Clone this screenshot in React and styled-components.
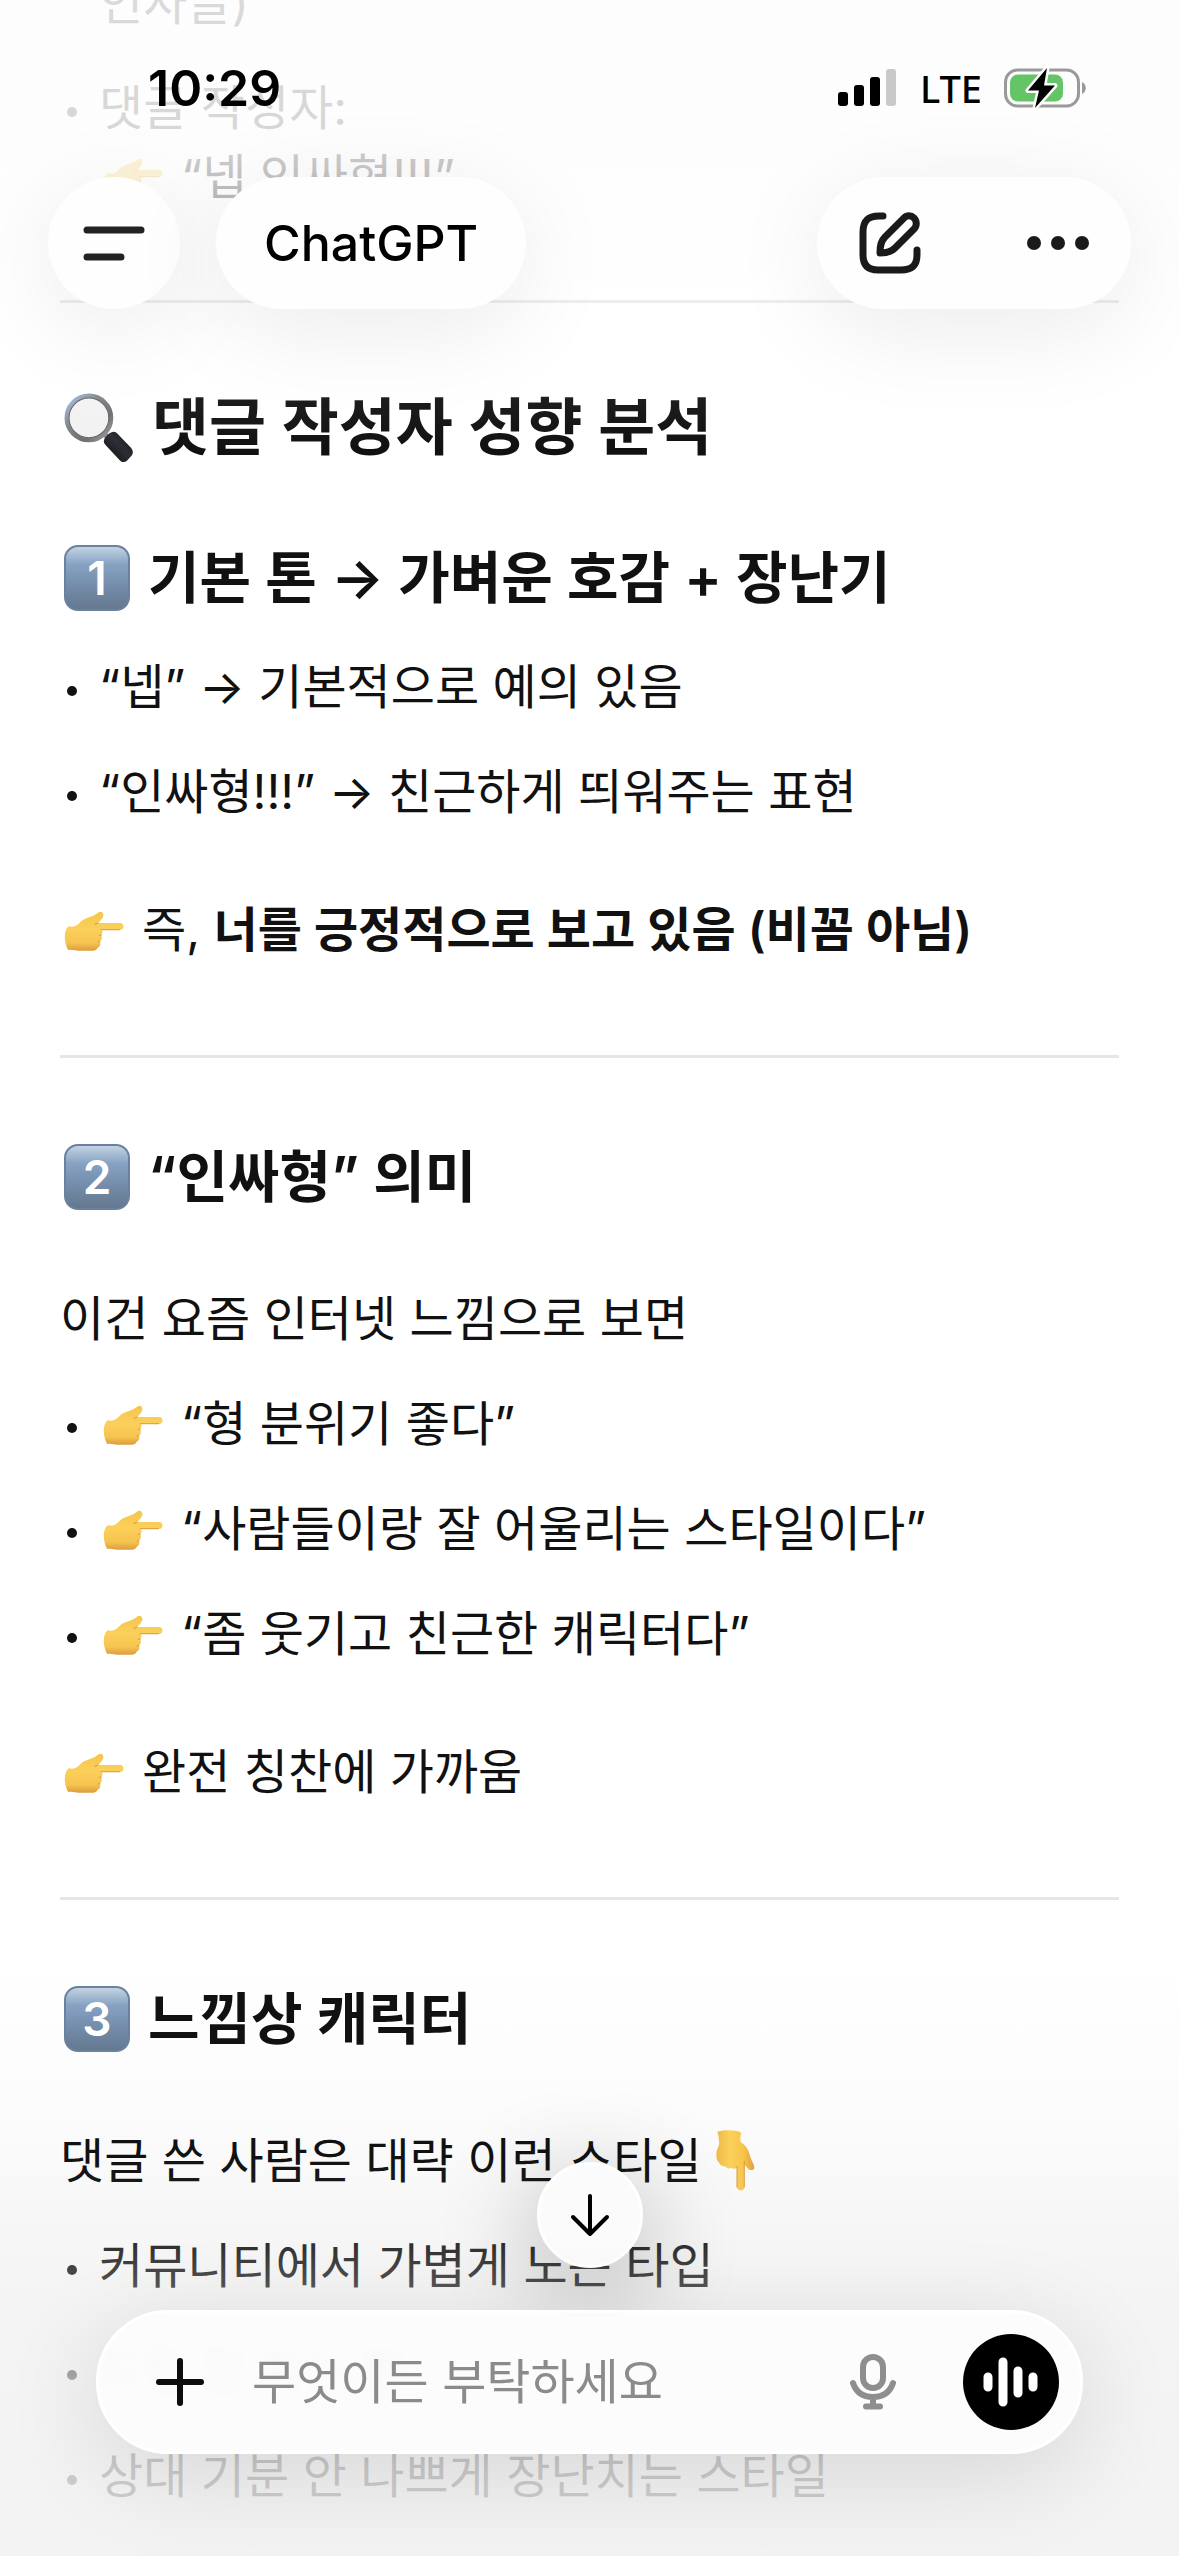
import React from "react";
import styled, { createGlobalStyle } from "styled-components";

const sans = `Inter, "Noto Sans CJK KR", sans-serif`;

const GlobalStyle = createGlobalStyle`
  *, *::before, *::after { box-sizing: border-box; }
  body { margin: 0; background: #fff; color: #111; font-family: ${sans}; }
  button { border: 0; padding: 0; background: none; color: inherit; font: inherit; cursor: pointer; }
  h2, h3, p, ul { margin: 0; padding: 0; }
`;

const Screen = styled.div`
  position: relative;
  height: 100vh;
  overflow: hidden;
  background: linear-gradient(to top, #f3f3f3 0, #f4f4f4 220px, #f7f7f7 330px, #fcfcfc 460px, #fff 600px);
`;

const Transcript = styled.main`
  display: flex;
  flex-direction: column;
  margin-top: -32px;
  padding: 0 60px;
  font-size: 48px;
  line-height: 69px;
`;

const Section = styled.section`
  display: flex;
  flex-direction: column;
  gap: 69px;
`;

const Stack = styled.div`
  display: flex;
  flex-direction: column;
  gap: 36px;
`;

const List = styled.ul`
  display: flex;
  flex-direction: column;
  gap: 36px;
  list-style: none;
`;

const Item = styled.li`
  display: grid;
  grid-template-columns: 39px 1fr;

  &::before {
    content: "";
    width: 10px;
    height: 10px;
    margin: 34px 0 0 7px;
    border-radius: 50%;
    background: ${(p) => (p.$continued ? "transparent" : "currentColor")};
  }
`;

const Divider = styled.hr`
  width: 100%;
  height: 3px;
  margin: 91px 0 81px;
  border: 0;
  background: #e6e6e6;
`;

const TopDivider = styled(Divider)`
  margin-top: 89px;
`;

const Title = styled.h2`
  display: flex;
  align-items: center;
  gap: 18px;
  font-size: 62px;
  line-height: 88px;
  font-weight: 600;
`;

const Heading = styled.h3`
  display: flex;
  align-items: center;
  gap: 18px;
  font-size: 56px;
  line-height: 76px;
  font-weight: 600;
`;

const Keycap = styled.span`
  display: grid;
  place-items: center;
  width: 66px;
  height: 66px;
  margin-left: 4px;
  border: 2px solid #6a82a0;
  border-radius: 14px;
  background: linear-gradient(#c3d3e2 0, #86a2c3 28%, #7a94b4 50%, #64788f 100%);
  color: #fff;
  font-size: 46px;
  line-height: 60px;
  font-weight: 600;
`;

const Strong = styled.strong`
  font-weight: 600;
`;

const HandIcon = styled.svg`
  width: 61px;
  height: 40px;
  margin: 0 18px 0 3px;
  vertical-align: -4px;
`;

const DownHandIcon = styled.svg`
  width: 39px;
  height: 61px;
  margin-left: 14px;
  vertical-align: -13px;
`;

const LensIcon = styled.svg`
  width: 70px;
  height: 70px;
  margin-left: 4px;
`;

const TopFade = styled.div`
  position: absolute;
  inset: 0 0 auto;
  height: 450px;
  pointer-events: none;
  background: linear-gradient(
    rgba(253, 253, 253, 0.85) 0,
    rgba(253, 253, 253, 0.84) 130px,
    rgba(253, 253, 253, 0.72) 195px,
    rgba(254, 254, 254, 0.3) 300px,
    rgba(255, 255, 255, 0.05) 400px,
    rgba(255, 255, 255, 0) 450px
  );
`;

const BottomFade = styled.div`
  position: absolute;
  inset: auto 0 0;
  height: 400px;
  pointer-events: none;
  background: linear-gradient(
    to top,
    rgba(243, 243, 243, 0.86) 0,
    rgba(243, 243, 243, 0.82) 90px,
    rgba(243, 243, 243, 0.66) 180px,
    rgba(243, 243, 243, 0.3) 268px,
    rgba(244, 244, 244, 0.1) 320px,
    rgba(246, 246, 246, 0) 400px
  );
`;

const Header = styled.header`
  position: absolute;
  inset: 0 0 auto;
  color: #000;
`;

const StatusBar = styled.div`
  display: flex;
  align-items: center;
  justify-content: space-between;
  height: 177px;
  padding: 0 92px 2px 148px;
`;

const Clock = styled.time`
  font-size: 50px;
  line-height: 60px;
  font-weight: 600;
`;

const StatusIcons = styled.div`
  display: flex;
  align-items: center;
  gap: 22px;
`;

const Network = styled.span`
  font-family: "Noto Sans", sans-serif;
  font-size: 38px;
  line-height: 48px;
  font-weight: 500;
`;

const Toolbar = styled.nav`
  display: flex;
  align-items: center;
  gap: 36px;
  padding: 0 48px;
`;

const glass = `
  background: #fefefe;
  box-shadow: 0 20px 100px rgba(0, 0, 0, 0.08);
`;

const RoundButton = styled.button`
  display: grid;
  place-items: center;
  width: 132px;
  height: 132px;
  border-radius: 66px;
  && { ${glass} }
`;

const ModelButton = styled.button`
  height: 132px;
  border-radius: 66px;
  && { ${glass} padding: 0 48px; font-size: 50px; line-height: 60px; font-weight: 500; }
`;

const ActionGroup = styled.div`
  display: flex;
  align-items: center;
  justify-content: space-between;
  width: 314px;
  height: 132px;
  margin-left: auto;
  padding: 0 42px;
  border-radius: 66px;
  ${glass}
`;

const IconButton = styled.button`
  display: grid;
  place-items: center;
  flex: none;
  width: ${(p) => p.$size}px;
  height: ${(p) => p.$size}px;
`;

const Footer = styled.footer`
  position: absolute;
  inset: auto 0 0;
  display: flex;
  flex-direction: column;
  align-items: center;
  gap: 42px;
  padding: 0 96px 102px;
`;

const ScrollButton = styled.button`
  display: grid;
  place-items: center;
  width: 106px;
  height: 106px;
  border-radius: 50%;
  color: #000;
  && { border: 3px solid #fff; background: #fbfbfb; }
  box-shadow: 0 20px 100px rgba(0, 0, 0, 0.3);
`;

const Composer = styled.form`
  display: flex;
  align-items: center;
  width: 100%;
  height: 144px;
  padding: 0 21px 0 45px;
  border: 3px solid #fff;
  border-radius: 72px;
  background: rgba(252, 252, 252, 0.96);
  backdrop-filter: blur(4px);
  box-shadow: 0 20px 100px rgba(0, 0, 0, 0.12);
`;

const Prompt = styled.input`
  flex: 1;
  min-width: 0;
  height: 72px;
  margin-left: 36px;
  padding: 0;
  border: 0;
  outline: 0;
  background: none;
  color: #111;
  font: 48px/72px ${sans};
  &::placeholder { color: #8b8b8b; opacity: 1; }
`;

const VoiceButton = styled.button`
  display: grid;
  place-items: center;
  width: 96px;
  height: 96px;
  margin-left: 54px;
  border-radius: 50%;
  && { background: #000; }
`;

const FirstSection = styled(Section)`
  margin-top: 68px;
`;

function Hand() {
  return (
    <HandIcon viewBox="37 45 183 120" aria-hidden="true">
      <defs>
        <linearGradient id="skin" x1="0" y1="0" x2="0" y2="1">
          <stop offset="0" stopColor="#f4c64c" />
          <stop offset="0.45" stopColor="#fbd05a" />
          <stop offset="0.8" stopColor="#f6c450" />
          <stop offset="1" stopColor="#dd9c3e" />
        </linearGradient>
      </defs>
      <path
        fill="url(#skin)"
        d="M54 91C75 96 82 85 95 73C112 64 128 62 144 49C152 43 160 52 158 60C155 70 148 76 142 81H208C222 81 222 102 208 102H153C158 108 155 114 151 117C156 124 153 134 147 137C152 144 148 152 141 155C139 161 133 164 126 164H84C72 164 65 159 53 162C44 150 34 108 54 91Z"
      />
      <path
        fill="none"
        stroke="#e3a443"
        strokeWidth="4"
        strokeLinecap="round"
        d="M206 101H152M151 117L147 118M147 137L143 138M142 81L133 85"
      />
    </HandIcon>
  );
}

function DownHand() {
  return (
    <DownHandIcon viewBox="53 32 117 184" aria-hidden="true">
      <defs>
        <linearGradient id="skinDown" x1="0" y1="0" x2="1" y2="0">
          <stop offset="0" stopColor="#efb947" />
          <stop offset="0.35" stopColor="#fbd05a" />
          <stop offset="0.7" stopColor="#f7c54b" />
          <stop offset="1" stopColor="#e0a23c" />
        </linearGradient>
      </defs>
      <path
        fill="url(#skinDown)"
        d="M56 38C70 31 112 31 129 40C126 52 124 60 128 69C142 78 151 92 154 106C158 122 170 138 168 148C164 156 153 153 149 148L138 137V204C138 218 117 218 116 204V146C110 150 103 150 99 146C92 150 84 147 82 142C72 142 64 138 62 130C55 126 54 118 54 104C54 88 64 80 62 68C61 56 61 46 56 38Z"
      />
      <path fill="none" stroke="#d99a3a" strokeWidth="3" strokeLinecap="round" d="M116 204V142M138 204V126" />
    </DownHandIcon>
  );
}

function Lens() {
  return (
    <LensIcon viewBox="44 37 208 208" aria-hidden="true">
      <defs>
        <linearGradient id="rim" x1="0" y1="0" x2="1" y2="1">
          <stop offset="0" stopColor="#a9c4ea" />
          <stop offset="0.35" stopColor="#80858c" />
          <stop offset="0.7" stopColor="#6c6c6c" />
          <stop offset="1" stopColor="#a8a6a2" />
        </linearGradient>
        <linearGradient id="grip" x1="0" y1="1" x2="1" y2="0">
          <stop offset="0" stopColor="#0c0d0f" />
          <stop offset="0.55" stopColor="#2b2e33" />
          <stop offset="1" stopColor="#0f1012" />
        </linearGradient>
      </defs>
      <path d="M162 157L178 172" stroke="#8c8f92" strokeWidth="16" />
      <circle cx="118" cy="111" r="66" fill="#f2f2f3" stroke="url(#rim)" strokeWidth="13" />
      <circle cx="118" cy="111" r="59" fill="none" stroke="#5d6166" strokeWidth="3" />
      <path
        fill="url(#grip)"
        d="M163 177C166 167 176 157 188 153C194 151 199 154 203 158L243 200C250 208 250 216 246 222L231 238C225 243 217 244 211 238L168 192C163 187 161 183 163 177Z"
      />
    </LensIcon>
  );
}

const Pointing = ({ children }) => (
  <span>
    <Hand />
    {children}
  </span>
);

export default function App() {
  return (
    <Screen>
      <GlobalStyle />
      <Transcript>
        <List>
          <Item $continued><span>인사글)</span></Item>
          <Item>
            <div>
              댓글 작성자:
              <br />
              <Pointing>“넵 인싸형!!!”</Pointing>
            </div>
          </Item>
        </List>
        <TopDivider />
        <Title><Lens />댓글 작성자 성향 분석</Title>
        <FirstSection>
          <Stack>
            <Heading><Keycap>1</Keycap>기본 톤 → 가벼운 호감 + 장난기</Heading>
            <List>
              <Item><span>“넵” → 기본적으로 예의 있음</span></Item>
              <Item><span>“인싸형!!!” → 친근하게 띄워주는 표현</span></Item>
            </List>
          </Stack>
          <p><Pointing>즉, <Strong>너를 긍정적으로 보고 있음 (비꼼 아님)</Strong></Pointing></p>
        </FirstSection>
        <Divider />
        <Section>
          <Heading><Keycap>2</Keycap>“인싸형” 의미</Heading>
          <Stack>
            <p>이건 요즘 인터넷 느낌으로 보면</p>
            <List>
              <Item><Pointing>“형 분위기 좋다”</Pointing></Item>
              <Item><Pointing>“사람들이랑 잘 어울리는 스타일이다”</Pointing></Item>
              <Item><Pointing>“좀 웃기고 친근한 캐릭터다”</Pointing></Item>
            </List>
          </Stack>
          <p><Pointing>완전 칭찬에 가까움</Pointing></p>
        </Section>
        <Divider />
        <Section>
          <Heading><Keycap>3</Keycap>느낌상 캐릭터</Heading>
          <Stack>
            <p>댓글 쓴 사람은 대략 이런 스타일<DownHand /></p>
            <List>
              <Item><span>커뮤니티에서 가볍게 노는 타입</span></Item>
              <Item><span>드립 잘 치는 편</span></Item>
              <Item><span>상대 기분 안 나쁘게 장난치는 스타일</span></Item>
            </List>
          </Stack>
        </Section>
      </Transcript>
      <TopFade />
      <BottomFade />
      <Header>
        <StatusBar>
          <Clock>10:29</Clock>
          <StatusIcons>
            <svg width="60" height="38" viewBox="0 0 60 38" aria-hidden="true">
              <rect x="0" y="23" width="10" height="14" rx="3" />
              <rect x="16" y="16" width="10" height="21" rx="3" />
              <rect x="32" y="8" width="10" height="29" rx="3" />
              <rect x="48" y="0" width="10" height="37" rx="3" fill="#c9c9c9" />
            </svg>
            <Network>LTE</Network>
            <svg width="83" height="42" viewBox="0 0 83 42" aria-hidden="true">
              <rect x="1.5" y="3" width="73" height="36" rx="12" fill="none" stroke="#9a9a9a" strokeWidth="3" />
              <path d="M78 15c5 2 5 10 0 12z" fill="#9a9a9a" />
              <rect x="6" y="7.500" width="53" height="27" rx="8" fill="#65c466" />
              <path d="M43 1L24 23.500H35L31 41L51 18.500H40Z" fill="#000" stroke="#fdfdfd" strokeWidth="5" strokeLinejoin="round" paintOrder="stroke" />
            </svg>
          </StatusIcons>
        </StatusBar>
        <Toolbar>
          <RoundButton aria-label="메뉴">
            <svg width="62" height="36" viewBox="0 0 62 36" fill="none" stroke="#222" strokeWidth="7" strokeLinecap="round">
              <path d="M4 5H58M4 32H38" />
            </svg>
          </RoundButton>
          <ModelButton>ChatGPT</ModelButton>
          <ActionGroup>
            <IconButton $size={62} aria-label="새 채팅">
              <svg width="62" height="62" viewBox="0 0 62 62" fill="none" stroke="#1a1a1a" strokeWidth="7" strokeLinecap="round" strokeLinejoin="round">
                <path d="M24 4H20C9 4 4 9 4 20V43C4 53 9 58 19 58H42C53 58 58 53 58 43V38" />
                <path d="M21 41C21 33 22 29 26 25L45 6C48 3 52 3 55 6S58 14 55 17L36 36C32 40 28 41 21 41Z" />
              </svg>
            </IconButton>
            <IconButton $size={62} aria-label="더 보기">
              <svg width="62" height="16" viewBox="0 0 62 16" fill="#1a1a1a">
                <circle cx="7" cy="8" r="7" />
                <circle cx="31" cy="8" r="7" />
                <circle cx="55" cy="8" r="7" />
              </svg>
            </IconButton>
          </ActionGroup>
        </Toolbar>
      </Header>
      <Footer>
        <ScrollButton aria-label="맨 아래로">
          <svg width="40" height="44" viewBox="0 0 40 44" fill="none" stroke="#000" strokeWidth="4" strokeLinecap="round" strokeLinejoin="round">
            <path d="M20 3V41M3 24L20 41L37 24" />
          </svg>
        </ScrollButton>
        <Composer onSubmit={(e) => e.preventDefault()}>
          <IconButton type="button" $size={72} aria-label="첨부">
            <svg width="48" height="48" viewBox="0 0 48 48" stroke="#0d0d0d" strokeWidth="6" strokeLinecap="round">
              <path d="M24 3V45M3 24H45" />
            </svg>
          </IconButton>
          <Prompt aria-label="메시지" placeholder="무엇이든 부탁하세요" />
          <IconButton type="button" $size={72} aria-label="음성 입력">
            <svg width="46" height="56" viewBox="0 0 46 56" fill="none" stroke="#8e8e8e" strokeWidth="6" strokeLinecap="round">
              <rect x="13" y="3" width="20" height="31" rx="10" />
              <path d="M3 29C6 38 13 43 23 43S40 38 43 29M23 44V52M16 52.500H30" />
            </svg>
          </IconButton>
          <VoiceButton type="button" aria-label="음성 모드">
            <svg width="56" height="50" viewBox="0 0 56 50" stroke="#fff" strokeWidth="9" strokeLinecap="round">
              <path d="M5 20V30M20 5V45M35 14V36M50 20V30" />
            </svg>
          </VoiceButton>
        </Composer>
      </Footer>
    </Screen>
  );
}
